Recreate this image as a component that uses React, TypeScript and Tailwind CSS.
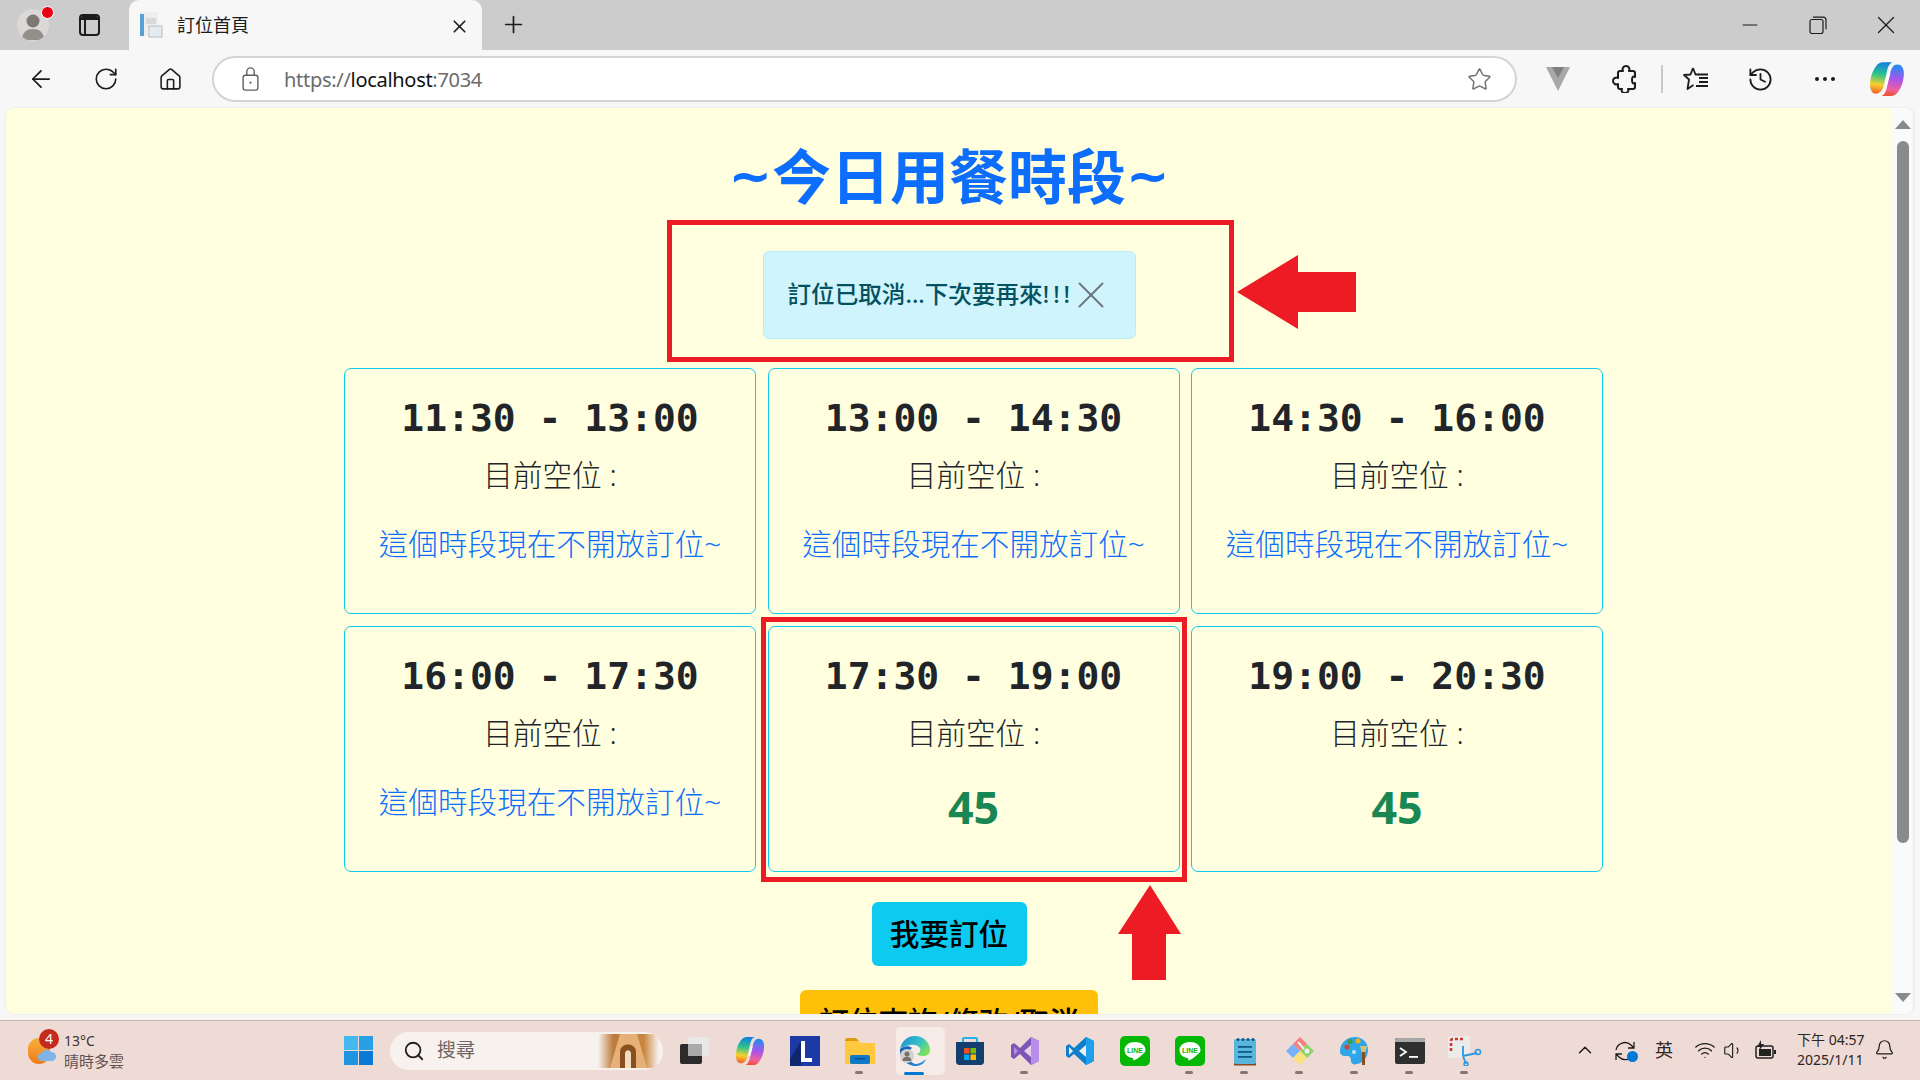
import { ArrowLeft, Bell, ChevronUp, History, House, Minus, Plus, RotateCw, Search, Star, Volume1, Wifi, X } from "lucide-react"

const slots = [
  { time: "11:30 - 13:00", seats: null },
  { time: "13:00 - 14:30", seats: null },
  { time: "14:30 - 16:00", seats: null },
  { time: "16:00 - 17:30", seats: null },
  { time: "17:30 - 19:00", seats: 45 },
  { time: "19:00 - 20:30", seats: 45 },
]

function CopilotIcon({ size }: { size: number }) {
  return (
    <svg width={size} height={size} viewBox="0 0 32 32">
      <defs>
        <linearGradient id="cpa" x1="0.5" y1="0" x2="0.4" y2="1">
          <stop offset="0" stopColor="#0f7fe0" />
          <stop offset="0.4" stopColor="#2fc48a" />
          <stop offset="0.72" stopColor="#f8d02c" />
          <stop offset="1" stopColor="#f5642c" />
        </linearGradient>
        <linearGradient id="cpb" x1="0.5" y1="0" x2="0.4" y2="1">
          <stop offset="0" stopColor="#1c8ff0" />
          <stop offset="0.45" stopColor="#a855ec" />
          <stop offset="0.8" stopColor="#f0609a" />
          <stop offset="1" stopColor="#f2502c" />
        </linearGradient>
      </defs>
      <path d="M12 1h9c-3 1-4 4-5 8l-3 13c-1 4-3 7-7 7-3 0-5-3-5-8 0-9 5-20 11-20z" fill="url(#cpa)" />
      <path d="M20 31h-9c3-1 4-4 5-8l3-13c1-4 3-7 6-7 4 0 6 3 6 8 0 9-5 20-11 20z" fill="url(#cpb)" />
      <path d="M17 11h2l-3 10h-2z" fill="#fff" />
    </svg>
  )
}

function EdgeIcon() {
  return (
    <svg width="32" height="32" viewBox="0 0 32 32">
      <defs>
        <linearGradient id="eda" x1="0" y1="0" x2="1" y2="0.6">
          <stop offset="0" stopColor="#1689d6" />
          <stop offset="0.6" stopColor="#35c1c9" />
          <stop offset="1" stopColor="#7be15c" />
        </linearGradient>
      </defs>
      <path d="M1 14C3 5 9 1 16 1c9 0 15 7 15 14 0 4-3 6-7 6-3 0-5-1-6-2 3-1 4-3 3-6-2-3-6-4-10-3C6 11 2 12 1 14z" fill="url(#eda)" />
      <path d="M1 14c3-3 9-4 12-1-3 2-4 6-3 10 1 4 5 7 11 7C11 33 0 26 1 14z" fill="#1467b8" />
      <path d="M10 27c4 3 11 3 17-3-2 5-6 7-11 7-2 0-4-1-6-4z" fill="#1f88d8" />
      <circle cx="8" cy="21" r="7" fill="#d2d0ce" />
      <circle cx="8" cy="19" r="2.5" fill="#77706c" />
      <path d="M3.5 26c0-3 2-4.200 4.500-4.200s4.500 1.200 4.500 4.200z" fill="#77706c" />
    </svg>
  )
}

function LineIcon() {
  return (
    <svg width="30" height="30" viewBox="0 0 30 30">
      <rect width="30" height="30" rx="5" fill="#06b806" />
      <path d="M15 6c-6 0-10.500 3.500-10.500 8s3.500 7.500 8.500 8c.5.5 0 2.500.5 2.500 1 0 6-3 9-6 2-1.800 3-3 3-4.500 0-4.500-4.500-8-10.500-8z" fill="#fff" />
      <text x="15" y="17" textAnchor="middle" fontSize="7" fontWeight="700" fontFamily="Liberation Sans, sans-serif" fill="#06b806">LINE</text>
    </svg>
  )
}

function TaskDots({ active }: { active?: boolean }) {
  if (active) return <span className="absolute bottom-[5px] left-[17px] h-[3px] w-[20px] rounded-full bg-[#0078d4]" />
  return <span className="absolute bottom-[6px] left-[23px] h-[3px] w-[8px] rounded-full bg-[#85746f]" />
}

const taskIcons = [
  {
    key: "view",
    dots: false,
    icon: (
      <svg width="30" height="30" viewBox="0 0 30 30">
        <rect x="0" y="8" width="22" height="20" rx="2" fill="#2b2b2b" />
        <rect x="8" y="1" width="21" height="19" rx="2" fill="#e9e9e9" opacity="0.9" />
        <rect x="8" y="8" width="14" height="12" fill="#aaa" />
      </svg>
    ),
  },
  { key: "copilot", dots: false, icon: <CopilotIcon size={30} /> },
  {
    key: "l",
    dots: false,
    icon: (
      <svg width="30" height="30" viewBox="0 0 30 30">
        <rect width="30" height="30" fill="#1c3aa6" />
        <path d="M0 30V23L11 5v25z" fill="#10266e" />
        <path d="M11 5h4v17h7v4H11z" fill="#fff" />
      </svg>
    ),
  },
  {
    key: "explorer",
    dots: true,
    icon: (
      <svg width="30" height="30" viewBox="0 0 30 30">
        <path d="M0 4c0-1 1-2 2-2h9l3 3h-14z" fill="#d99a0c" />
        <path d="M0 5h14l2 2h14v21H0z" fill="#ffc83d" />
        <rect x="5" y="19" width="20" height="9" rx="2" fill="#0f78c8" />
        <rect x="10" y="22" width="10" height="1.500" fill="#08518c" />
      </svg>
    ),
  },
  { key: "edge", dots: true, active: true, icon: <EdgeIcon /> },
  {
    key: "store",
    dots: false,
    icon: (
      <svg width="30" height="30" viewBox="0 0 30 30">
        <path d="M8 6V3c0-1 1-1 1-1h12s1 0 1 1v3" stroke="#28b0e8" strokeWidth="2" fill="none" />
        <path d="M1 6h28v20c0 2-2 3-3 3H4c-1 0-3-1-3-3z" fill="#123e70" />
        <rect x="9" y="12" width="5.500" height="5.500" fill="#f25022" />
        <rect x="15.500" y="12" width="5.500" height="5.500" fill="#7fba00" />
        <rect x="9" y="18.500" width="5.500" height="5.500" fill="#00a4ef" />
        <rect x="15.500" y="18.500" width="5.500" height="5.500" fill="#ffb900" />
      </svg>
    ),
  },
  {
    key: "vs",
    dots: true,
    icon: (
      <svg width="30" height="30" viewBox="0 0 30 30">
        <path d="M21 1l8 4v20l-8 4-11-11-6 5-3-2V9l3-2 6 5z" fill="#7d55b8" />
        <path d="M21 1l8 4v20l-8 4z" fill="#b98ee8" />
        <path d="M4 11v8l4-4z" fill="#b98ee8" />
        <path d="M21 9l-7 6 7 6z" fill="#f1dff0" opacity="0.9" />
      </svg>
    ),
  },
  {
    key: "code",
    dots: false,
    icon: (
      <svg width="30" height="30" viewBox="0 0 30 30">
        <path d="M21 1l8 4v20l-8 4-12-11-5 4-3-2v-10l3-2 5 4z" fill="#0f7ecb" />
        <path d="M21 1l8 4v20l-8 4z" fill="#1ea0ee" />
        <path d="M21 9l-7 6 7 6z" fill="#f0efef" />
        <path d="M4 11v8l4-4z" fill="#f0efef" />
      </svg>
    ),
  },
  { key: "line1", dots: false, icon: <LineIcon /> },
  { key: "line2", dots: true, icon: <LineIcon /> },
  {
    key: "notepad",
    dots: true,
    icon: (
      <svg width="30" height="30" viewBox="0 0 30 30">
        <rect x="4" y="27" width="22" height="2.500" fill="#8a4a20" />
        <rect x="4" y="3" width="22" height="25" rx="2" fill="#58b6dc" />
        <rect x="8" y="10" width="14" height="1.800" fill="#0e5a86" />
        <rect x="8" y="15" width="14" height="1.800" fill="#0e5a86" />
        <rect x="8" y="20" width="14" height="1.800" fill="#0e5a86" />
        <circle cx="8" cy="3.500" r="1.500" fill="#0e5a86" />
        <circle cx="13" cy="3.500" r="1.500" fill="#0e5a86" />
        <circle cx="18" cy="3.500" r="1.500" fill="#0e5a86" />
        <circle cx="23" cy="3.500" r="1.500" fill="#0e5a86" />
      </svg>
    ),
  },
  {
    key: "git",
    dots: true,
    icon: (
      <svg width="30" height="30" viewBox="0 0 30 30">
        <path d="M15 1l7 7-7 7-7-7z" fill="#f47f7f" />
        <path d="M22 8l7 7-7 7-7-7z" fill="#8ed26a" />
        <path d="M8 8l7 7-7 7-7-7z" fill="#7ab0f8" />
        <path d="M15 15l7 7-7 7-7-7z" fill="#fbe27e" />
        <path d="M13 6l6 7" stroke="#eee" strokeWidth="2" />
        <circle cx="22" cy="15" r="2.500" fill="#eee" />
      </svg>
    ),
  },
  {
    key: "palette",
    dots: true,
    icon: (
      <svg width="30" height="30" viewBox="0 0 30 30">
        <path d="M15 1C7 1 0 7 0 15c0 5 4 5 7 5s4 2 4 5c0 3 3 4 6 3 6-1 11-7 11-14C28 6 22 1 15 1z" fill="#2ea6e8" />
        <circle cx="7" cy="11" r="2.500" fill="#d1462a" />
        <circle cx="10" cy="5.500" r="2.500" fill="#3e9d3a" />
        <circle cx="18" cy="5" r="2.500" fill="#f0b414" />
        <circle cx="14" cy="16" r="2" fill="#bfe4f8" />
        <path d="M20 10h7l-2 7h-3z" fill="#d8c07a" />
        <rect x="22" y="16" width="3" height="13" fill="#8a4e22" />
      </svg>
    ),
  },
  {
    key: "terminal",
    dots: true,
    icon: (
      <svg width="30" height="30" viewBox="0 0 30 30">
        <rect y="2" width="30" height="26" rx="2" fill="#2f2f2f" />
        <path d="M0 4c0-1 1-2 2-2h26c1 0 2 1 2 2v2H0z" fill="#a8a8a8" />
        <path d="M5 12l6 4-6 4" stroke="#fff" strokeWidth="1.800" fill="none" />
        <rect x="14" y="20" width="9" height="1.800" fill="#fff" />
      </svg>
    ),
  },
  {
    key: "snip",
    dots: true,
    icon: (
      <svg width="34" height="30" viewBox="0 0 34 30">
        <rect width="22" height="22" rx="2" fill="#ecebeb" />
        <path d="M3 15V5c0-1 1-2 2-2h10" stroke="#cf3a24" strokeWidth="2.500" strokeDasharray="3 2" fill="none" />
        <path d="M15 10v10m0 0l14-3m-14 3l3 8" stroke="#2c97e0" strokeWidth="1.800" fill="none" />
        <circle cx="30" cy="16" r="2.500" stroke="#2c97e0" strokeWidth="1.500" fill="none" />
        <circle cx="18" cy="28" r="2" stroke="#2c97e0" strokeWidth="1.500" fill="none" />
      </svg>
    ),
  },
]

function TitleBar() {
  return (
    <div className="flex h-[50px] items-center bg-[#cccccc]">
      <div className="relative ml-[17px] flex h-[32px] w-[32px] items-center justify-center overflow-hidden rounded-full bg-[#dad9d7]">
        <svg width="30" height="30" viewBox="0 0 30 30">
          <circle cx="15" cy="11" r="6.500" fill="#7d7974" />
          <path d="M4 30c0-8 5-11 11-11s11 3 11 11z" fill="#938f8a" />
        </svg>
      </div>
      <span className="relative -ml-[8px] -mt-[25px] box-content h-[11px] w-[11px] rounded-full border border-white bg-[#e60012]" />
      <div className="ml-[25px] flex h-[22px] w-[21px] flex-col overflow-hidden rounded-[4px] border-2 border-[#1c1c1c]">
        <div className="h-[4px] bg-[#1c1c1c]" />
        <div className="flex-1 border-l-[5px] border-l-transparent">
          <div className="h-full w-[2px] -ml-[2px] bg-[#1c1c1c]" />
        </div>
      </div>
      <div className="ml-[29px] flex h-[50px] w-[353px] items-center rounded-t-[10px] bg-[#f7f7f7]">
        <svg className="ml-[10px]" width="24" height="28" viewBox="0 0 24 28">
          <rect x="1" y="1" width="18" height="24" fill="#eeeeee" />
          <rect x="1" y="3" width="4" height="22" fill="#5a9fd4" />
          <rect x="7" y="7" width="10" height="6" fill="#d9d9d9" />
          <rect x="10" y="15" width="13" height="11" fill="#e4ebf0" stroke="#b8c0c6" />
        </svg>
        <span className="ml-[14px] -mt-[2px] text-[18px] text-[#1c1c1c] [font-family:'Noto_Sans_CJK_TC',sans-serif]">訂位首頁</span>
        <X className="ml-[200px] mt-[2px] text-[#1c1c1c]" size={21} strokeWidth={1.9} />
      </div>
      <Plus className="ml-[18px] -mt-[1px] text-[#1c1c1c]" size={27} strokeWidth={1.5} />
      <div className="ml-auto flex items-center">
        <Minus className="mr-[47px] text-[#1c1c1c]" size={24} strokeWidth={1} />
        <svg className="mr-[44px]" width="18" height="18" viewBox="0 0 18 18" fill="none" stroke="#1c1c1c" strokeWidth="1.200">
          <rect x="1" y="3.500" width="13" height="14" rx="2" />
          <path d="M4 1.200h10c2 0 3 1 3 3v9" />
        </svg>
        <X className="mr-[19px] text-[#1c1c1c]" size={30} strokeWidth={1} />
      </div>
    </div>
  )
}

function Toolbar() {
  return (
    <div className="flex h-[58px] items-center bg-[#f7f7f7] pl-[8px] text-[#1c1c1c]">
      <div className="flex w-[65px] justify-center"><ArrowLeft size={28} strokeWidth={1.5} /></div>
      <div className="flex w-[65px] justify-center"><RotateCw size={26} strokeWidth={1.5} /></div>
      <div className="flex w-[65px] justify-center"><House size={25} strokeWidth={1.5} /></div>
      <div className="ml-[9px] flex h-[46px] w-[1305px] items-center rounded-full border-2 border-[#d4d4d4] bg-white">
        <svg className="ml-[28px]" width="17" height="24" viewBox="0 0 18 26" fill="none" stroke="#5f5f5f" strokeWidth="1.500">
          <rect x="1" y="9" width="16" height="16" rx="2.500" />
          <path d="M5 9V5a4 4 0 018 0v4" />
          <circle cx="9" cy="17" r="1.200" fill="#5f5f5f" stroke="none" />
        </svg>
        <span className="ml-[25px] mt-[2px] text-[20px] text-[#6b6b6b] [font-family:'Noto_Sans',sans-serif] tracking-[-0.3px]">
          https://<span className="text-[#111111]">localhost</span>:7034
        </span>
        <Star className="ml-auto mr-[23px] text-[#6f6f6f]" size={25} strokeWidth={1.4} />
      </div>
      <div className="ml-[9px] flex w-[64px] justify-center">
        <svg width="24" height="26" viewBox="0 0 24 26">
          <path d="M0 1h24L12 25z" fill="#a8a8a8" />
          <path d="M6 1h12l-6 11z" fill="#7f7f7f" />
        </svg>
      </div>
      <div className="flex w-[68px] justify-center">
        <svg width="24" height="28" viewBox="0 0 24 28" fill="none" stroke="#1c1c1c" strokeWidth="2" strokeLinejoin="round">
          <path d="M8 6h3c-1-2 0-5 3-5s4 3 3 5h4c1 0 2 1 2 2v4c-2-1-3 0-3 3s1 4 3 3v4c0 1-1 2-2 2h-5c1 2 0 4-3 4s-4-2-3-4H8c-1 0-2-1-2-2v-3c-2 1-5 0-5-3s3-4 5-3V8c0-1 1-2 2-2z" />
        </svg>
      </div>
      <div className="ml-[3px] mr-[1px] h-[28px] w-[2px] bg-[#c8c8c8]" />
      <div className="flex w-[64px] justify-center">
        <svg width="28" height="28" viewBox="0 0 28 28" fill="none" stroke="#1c1c1c" strokeWidth="1.800" strokeLinejoin="round">
          <path d="M11 3l2.500 6.500h3M11 3L8.500 9.500 2 10l5 4.500L5.500 24l6-4" />
          <path d="M17 13h9M17 17h9M14 21h12M16 9.500h10" />
        </svg>
      </div>
      <div className="flex w-[64px] justify-center"><History size={27} strokeWidth={1.6} /></div>
      <div className="flex w-[65px] justify-center">
        <svg width="22" height="6" viewBox="0 0 22 6" fill="#1c1c1c">
          <circle cx="3" cy="3" r="2" />
          <circle cx="11" cy="3" r="2" />
          <circle cx="19" cy="3" r="2" />
        </svg>
      </div>
      <div className="flex w-[59px] justify-center"><CopilotIcon size={36} /></div>
    </div>
  )
}

function Page() {
  return (
    <div className="relative h-full flex-1 overflow-hidden bg-[#ffffe0] [font-family:'Noto_Sans','Noto_Sans_CJK_TC',sans-serif]">
      <h1 className="mt-[35px] flex items-center justify-center text-[59px] leading-[67px] font-bold text-[#0d6efd]">
        <span className="text-[52px] [font-family:'DejaVu_Sans',sans-serif]">~</span>
        今日用餐時段
        <span className="text-[52px] [font-family:'DejaVu_Sans',sans-serif]">~</span>
      </h1>
      <div className="mx-auto mt-[41px] flex h-[88px] w-[373px] items-center rounded-[6px] border border-[#b6effb] bg-[#cff4fc] pl-[24px] text-[23.6px] font-medium text-[#055160]">
        <span>
          訂位已取消...下次要再來<span className="tracking-[4px]">!!!</span>
        </span>
        <X className="-ml-[6px] text-[#6c757d]" size={46} strokeWidth={1} />
      </div>
      <div className="ml-[338px] mt-[29px] grid w-[1259px] grid-cols-3 gap-x-[11.5px] gap-y-[12px]">
        {slots.map((slot) => (
          <div key={slot.time} className="flex h-[246px] flex-col items-center rounded-[7px] border border-[#0dcaf0] pt-[26px]">
            <div className="text-[38px] leading-[46px] font-bold text-[#212529] [font-family:'DejaVu_Sans_Mono',monospace]">{slot.time}</div>
            <div className="mt-[16px] text-[29.6px] leading-[36px] font-light text-[#212529]">目前空位 :</div>
            {slot.seats === null ? (
              <div className="mt-[33px] text-[29.6px] leading-[36px] font-light text-[#0d6efd]">這個時段現在不開放訂位~</div>
            ) : (
              <div className="mt-[32px] text-[44.8px] leading-[48px] font-bold text-[#198754]">{slot.seats}</div>
            )}
          </div>
        ))}
      </div>
      <button className="mx-auto mt-[30px] block h-[64px] w-[155px] rounded-[6px] bg-[#0dcaf0] text-[29.6px] font-medium text-black">我要訂位</button>
      <button className="mx-auto mt-[24px] block h-[64px] w-[298px] rounded-[6px] bg-[#ffc107] text-[29.6px] font-medium text-black">訂位查詢/修改/取消</button>

      <div className="absolute left-[661px] top-[112px] h-[142px] w-[567px] border-[5px] border-[#ed1c24]" />
      <div className="absolute left-[755px] top-[509px] h-[265px] w-[426px] border-[5px] border-[#ed1c24]" />
      <svg className="absolute left-[1231px] top-[147px]" width="120" height="74" viewBox="0 0 120 74">
        <path d="M0 37L61 0v17h58v40H61v17z" fill="#ed1c24" />
      </svg>
      <svg className="absolute left-[1112px] top-[777px]" width="64" height="96" viewBox="0 0 64 96">
        <path d="M32 0l31 49H48v46H14V49H0z" fill="#ed1c24" />
      </svg>
    </div>
  )
}

function Scrollbar() {
  return (
    <div className="flex h-full w-[21px] flex-col items-center bg-[#fafafa] pt-[12px]">
      <div className="h-0 w-0 border-x-[8px] border-b-[9px] border-x-transparent border-b-[#8a8a8a]" />
      <div className="ml-[1px] mt-[12px] h-[702px] w-[12px] rounded-[6px] bg-[#8a8a8a]" />
      <div className="mt-auto mb-[12px] h-0 w-0 border-x-[8px] border-t-[9px] border-x-transparent border-t-[#8a8a8a]" />
    </div>
  )
}

function Taskbar() {
  return (
    <div className="relative flex h-[60px] items-center border-t border-[#c9b5af] bg-[#efdbd5] [font-family:'Noto_Sans','Noto_Sans_CJK_TC',sans-serif]">
      <div className="relative ml-[28px] h-[26px] w-[28px]">
        <div className="h-[26px] w-[22px] rounded-full bg-gradient-to-b from-[#f4b23c] to-[#f07818]" />
        <svg className="absolute bottom-[3px] right-0" width="18" height="11" viewBox="0 0 18 11">
          <path d="M4 11a4 4 0 010-8 5 5 0 019-1 4.500 4.500 0 011 9z" fill="#7fb4e6" />
        </svg>
        <span className="absolute -top-[9px] left-[11px] flex h-[20px] w-[20px] items-center justify-center rounded-full bg-[#c42b1c] text-[14px] text-white">4</span>
      </div>
      <div className="ml-[8px] w-[71px] text-[14px] leading-[20px] text-[#3d3330]">
        <div>13°C</div>
        <div className="text-[15px] text-[#5e5350]">晴時多雲</div>
      </div>
      <svg className="ml-[209px]" width="29" height="29" viewBox="0 0 29 29">
        <rect width="14" height="14" fill="#45b8f0" />
        <rect x="15" width="14" height="14" fill="#28a0e6" />
        <rect y="15" width="14" height="14" fill="#1c94e0" />
        <rect x="15" y="15" width="14" height="14" fill="#0a7ad4" />
      </svg>
      <div className="ml-[17px] flex h-[38px] w-[273px] items-center overflow-hidden rounded-full bg-[#f8f2ef]">
        <Search className="ml-[13px] text-[#222222]" size={22} strokeWidth={2} />
        <span className="ml-[12px] text-[19px] text-[#6f6561]">搜尋</span>
        <svg className="ml-auto mr-[4px]" width="61" height="34" viewBox="0 0 61 34">
          <defs>
            <linearGradient id="arch" x1="0" y1="0" x2="1" y2="0">
              <stop offset="0" stopColor="#f8f2ef" />
              <stop offset="0.25" stopColor="#bb7c3c" />
              <stop offset="0.75" stopColor="#c9863e" />
              <stop offset="1" stopColor="#f8f2ef" />
            </linearGradient>
          </defs>
          <rect width="61" height="34" fill="url(#arch)" />
          <path d="M22 0h17l10 34H12z" fill="#e6b078" />
          <path d="M22 34V18c0-10 16-10 16 0v16z" fill="#8a4f1e" />
          <path d="M27 34V20c0-5 6-5 6 0v14z" fill="#f2dcc0" />
        </svg>
      </div>
      <div className="ml-[4px] flex h-full">
        {taskIcons.map((item) => (
          <div key={item.key} className="relative flex w-[55px] items-center justify-center">
            {item.active && <div className="absolute left-[9px] top-[6px] h-[48px] w-[48px] rounded-[5px] bg-[#f6ebe7] shadow-[2px_0_0_#f3e4df]" />}
            <div className="relative">{item.icon}</div>
            {item.dots && <TaskDots active={item.active} />}
          </div>
        ))}
      </div>
      <ChevronUp className="absolute left-[1574px] top-[18px] text-[#1c1c1c]" size={22} strokeWidth={1.6} />
      <div className="absolute left-[1614px] top-[19px]">
        <svg width="22" height="22" viewBox="0 0 22 22" fill="none" stroke="#1c1c1c" strokeWidth="1.300">
          <path d="M2 10a9 9 0 0115-5l3 3M20 2v6h-6" />
          <path d="M20 13a9 9 0 01-15 4l-3-3M2 20v-6h6" />
        </svg>
        <span className="absolute bottom-[0px] right-[-2px] h-[11px] w-[11px] rounded-full bg-[#0078d4]" />
      </div>
      <span className="absolute left-[1655px] top-[16px] text-[18px] text-[#2b2523]">英</span>
      <Wifi className="absolute left-[1694px] top-[18px] text-[#1c1c1c]" size={22} strokeWidth={1.5} />
      <Volume1 className="absolute left-[1723px] top-[19px] text-[#1c1c1c]" size={21} strokeWidth={1.3} />
      <svg className="absolute left-[1755px] top-[19px]" width="22" height="20" viewBox="0 0 22 20">
        <path d="M1 8c0-1 1-2 2-2h13c1 0 2 1 2 2v8c0 1-1 2-2 2H3c-1 0-2-1-2-2z" fill="none" stroke="#222" strokeWidth="1.500" />
        <rect x="4" y="9" width="12" height="7" fill="#222" />
        <rect x="19" y="10" width="2" height="4" fill="#222" />
        <path d="M6 0L2 7h3l-1 4 5-7H6z" fill="#222" />
      </svg>
      <div className="absolute left-[1797px] top-[9px] text-[14px] leading-[20px] text-[#2b2523]">
        <div>下午 04:57</div>
        <div>2025/1/11</div>
      </div>
      <Bell className="absolute left-[1874px] top-[18px] text-[#1c1c1c]" size={21} strokeWidth={1.4} />
    </div>
  )
}

export default function App() {
  return (
    <div className="flex h-[1080px] w-[1920px] flex-col overflow-hidden bg-[#f7f7f7]">
      <TitleBar />
      <Toolbar />
      <div className="h-[912px] px-[6px] pb-[6px]">
        <div className="flex h-[906px] overflow-hidden rounded-[8px] border-r border-[#ececec] shadow-[0_0_2px_#dddddd]">
          <Page />
          <Scrollbar />
        </div>
      </div>
      <Taskbar />
    </div>
  )
}
